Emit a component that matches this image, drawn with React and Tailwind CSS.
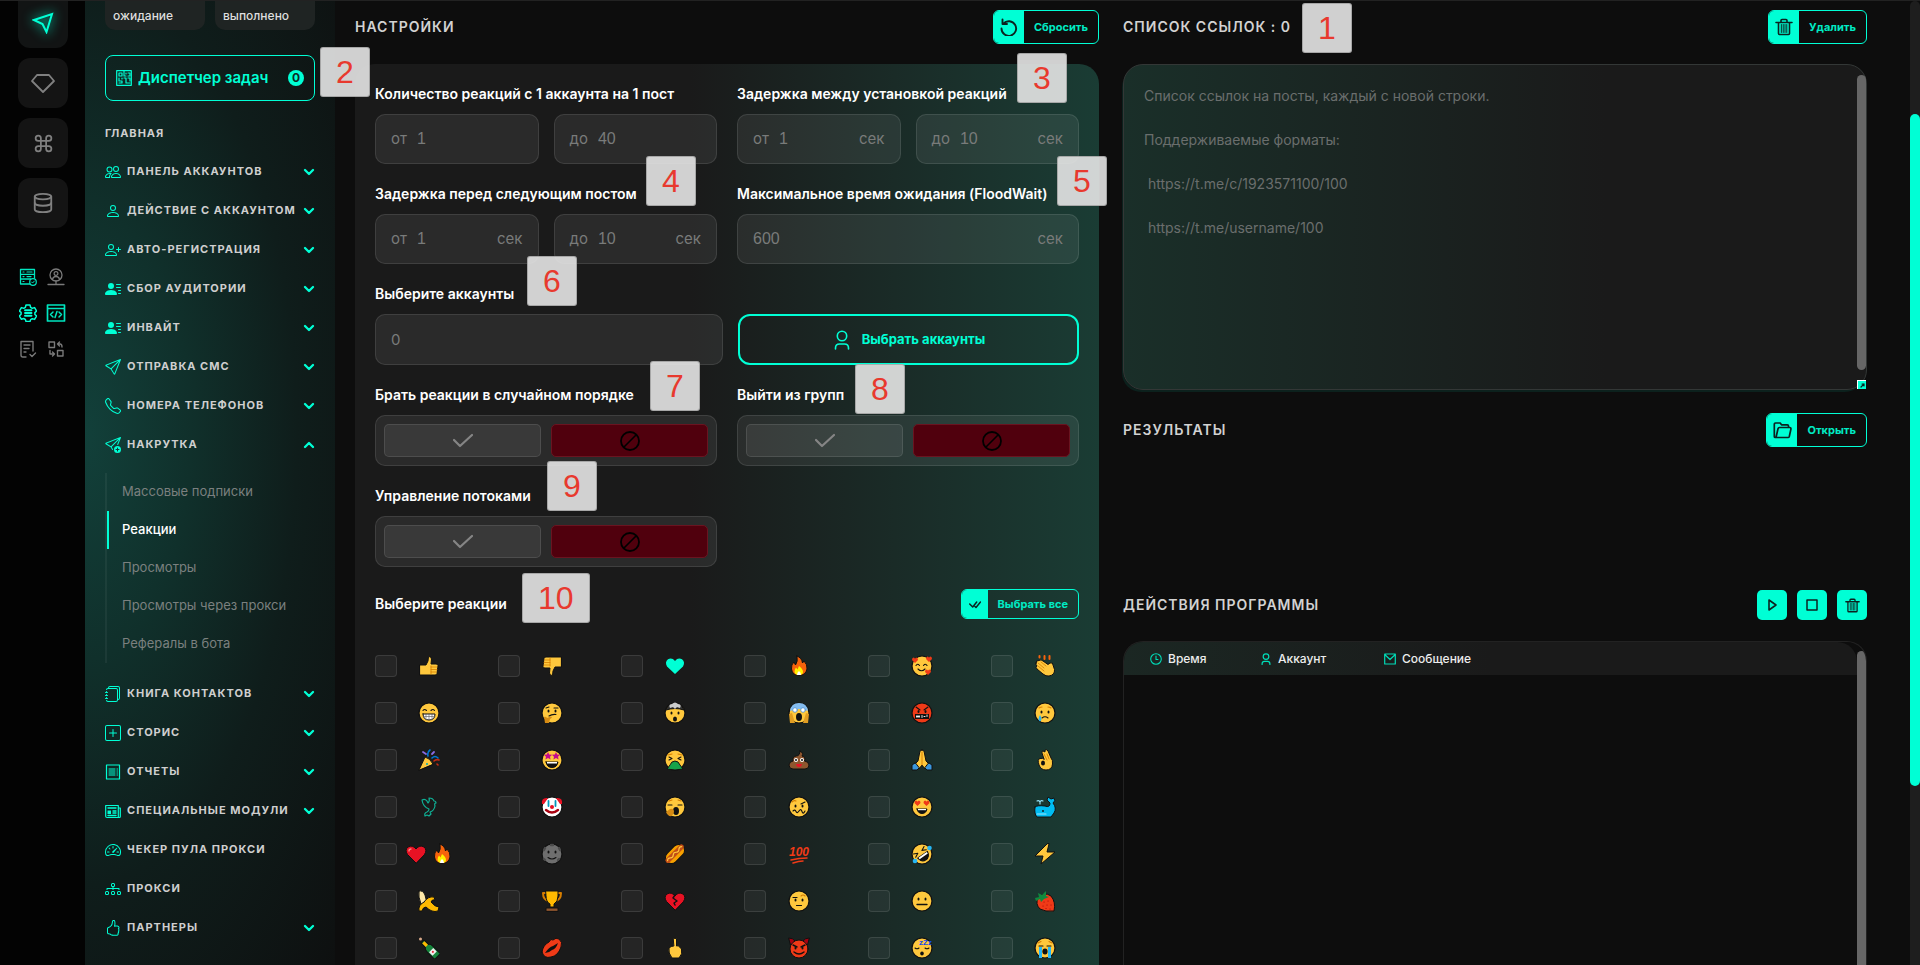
import { ChevronDown, ChevronUp, Command, Database } from "lucide-react";
import {
  BsDiagram3,
  BsHandThumbsUp,
  BsJournals,
  BsPeople,
  BsPerson,
  BsPersonLinesFill,
  BsPersonPlus,
  BsPlusSquare,
  BsSendPlus,
  BsSend,
  BsSpeedometer2,
  BsTelephone,
} from "react-icons/bs";

/* ---------- icons ---------- */

function Svg({ size = 16, box = 16, className, children }) {
  return (
    <svg
      width={size}
      height={size}
      viewBox={`0 0 ${box} ${box}`}
      fill="none"
      stroke="currentColor"
      strokeLinecap="round"
      strokeLinejoin="round"
      className={className}
      aria-hidden="true"
    >
      {children}
    </svg>
  );
}

const NavIcon = () => (
  <Svg size={22} box={22} className="drop-shadow-[0_0_6px_#00ffd5]">
    <path d="M2 8 20 2 14.5 20 10.5 12Z" strokeWidth="2" strokeLinejoin="miter" />
  </Svg>
);

const DiamondIcon = () => (
  <Svg size={24} box={24}>
    <path d="M6 4h12l5 6-11 11L1 10Z" strokeWidth="1.8" />
  </Svg>
);

const ResetIcon = () => (
  <Svg size={18} box={18}>
    <path d="M3.500 5.500a7.300 7.300 0 1 1-2 5" strokeWidth="1.900" />
    <path d="M2.500 1.500v4.500H7" strokeWidth="1.900" />
  </Svg>
);

const FolderIcon = () => (
  <Svg size={19} box={19}>
    <path d="M15.500 6.500V5q0-1.200-1.200-1.200H8.500L7.200 2H2.500Q1.300 2 1.300 3.200v12.300q0 1 1 1h12.700q1 0 1.300-1L18 7.800q0-1.300-1.200-1.300H6.500q-1.200 0-1.500 1.300L3 16.500" strokeWidth="1.700" />
  </Svg>
);

const TrashIcon = ({ size = 18 }) => (
  <Svg size={size} box={18}>
    <path d="M1 4.5h16M6 4V2.5Q6 1.5 7 1.5h4q1 0 1 1V4M3.5 5v10.5q0 1 1 1h9q1 0 1-1V5" strokeWidth="1.6" />
    <path d="M6.300 6.500v8M8.200 6.500v8M10 6.500v8M11.800 6.500v8" strokeWidth="1" />
  </Svg>
);

const AccountIcon = ({ size = 20, width = 1.6 }) => (
  <Svg size={size} box={20}>
    <circle cx="10" cy="6" r="4.7" strokeWidth={width} />
    <path d="M3.5 19v-1q0-4 4-4h5q4 0 4 4v1" strokeWidth={width} />
  </Svg>
);

const TaskIcon = () => (
  <Svg size={16} box={16}>
    <path d="M.7.700h14.600v14.600H.7Z" strokeWidth="1.2" />
    <path d="M3 3h3v3H3ZM3 8v3h3v2H3M8 1v5h2M12 3h2v3h-2M8 8h2v5h4M12 8h2v3M6 8v1M10 3v1" strokeWidth="1.2" />
  </Svg>
);

const ReportIcon = () => (
  <Svg>
    <path d="M1.5 1h13v14h-13Z" strokeWidth="1.2" />
    <path d="M4 5h6M4 7h6M4 9h6M4 11h6M12 5h.5M12 7h.5M12 9h.5M12 11h.5" strokeWidth="1" />
  </Svg>
);

const ModulesIcon = () => (
  <Svg>
    <path d="M.7 2.5h12.600v12H2q-1.300 0-1.300-1.200ZM13.300 5h2v8.500q0 1-1 1" strokeWidth="1.2" />
    <path d="M3 5h8M3 12.5h8M8 8h3M8 10h3" strokeWidth="1.4" />
    <path d="M2.5 7.5h3.500v3.500H2.500Z" fill="currentColor" stroke="none" />
  </Svg>
);

const ServerOkIcon = () => (
  <Svg size={18} box={18}>
    <path d="M11 16H1.5V1.5h14V10M1.5 6.300h14M1.5 11h10" strokeWidth="1.3" />
    <path d="M4 4h1M8 4h5M4 8.600h1M8 8.600h4M4 13.500h1" strokeWidth="1.2" />
    <circle cx="14" cy="14" r="3.3" strokeWidth="1.2" />
    <path d="m12.600 14 1 1 1.800-2" strokeWidth="1" />
  </Svg>
);

const ProxyUserIcon = () => (
  <Svg size={18} box={18}>
    <circle cx="9" cy="7" r="6" strokeWidth="1.3" />
    <circle cx="9" cy="5.5" r="1.9" strokeWidth="1.2" />
    <path d="M5.5 11.5Q6 8.500 9 8.500t3.500 3M9 13v3M1 16.500h16M8 16.500h2" strokeWidth="1.3" />
  </Svg>
);

const GearListIcon = () => (
  <Svg size={18} box={18}>
    <path d="M7 1h4l.6 2.300 1.700 1 2.300-.7 2 3.400-1.700 1.600v1.900L17.600 12l-2 3.400-2.300-.7-1.700 1L11 17.500H7l-.6-2-1.700-1-2.300.8-2-3.400 1.700-1.600V8.400L.400 7l2-3.400 2.300.7 1.700-1Z" strokeWidth="1.5" />
    <path d="M6 6.300h6.500M6 9h6.500M6 11.800h6.500" strokeWidth="1.9" />
  </Svg>
);

const CodeWindowIcon = () => (
  <Svg size={20} box={20}>
    <path d="M1.5 2h17v16h-17ZM1.5 5.500h17" strokeWidth="1.7" />
    <path d="m7 9-2.500 2.500L7 14M13 9l2.500 2.500L13 14M11 8.500l-2 6" strokeWidth="1.5" />
  </Svg>
);

const DocCheckIcon = () => (
  <Svg size={18} box={18}>
    <path d="M7 17H4q-2 0-2-2V1.500h12V11M5 5h6M5 8.500h5M5 12h2M11 14.500l2 2 3.500-3.500" strokeWidth="1.4" />
  </Svg>
);

const SwapIcon = () => (
  <Svg size={18} box={18}>
    <path d="M2 2h5.500v5.500H2ZM10.500 10.500H16V16h-5.500ZM10.500 4h2.500q2 0 2 3M12.500 2l-2 2 2 2M3 10.500V14h4M5.500 12 7.500 14l-2 2" strokeWidth="1.4" />
  </Svg>
);

const CheckIcon = () => (
  <Svg size={20} box={20}>
    <path d="m1 9 6 6L19 4" strokeWidth="2.2" />
  </Svg>
);

const DenyIcon = () => (
  <Svg size={20} box={20}>
    <circle cx="10" cy="10" r="9" strokeWidth="1.8" />
    <path d="m4 16 12-12" strokeWidth="1.6" />
  </Svg>
);

const DoubleCheckIcon = () => (
  <Svg size={12} box={12}>
    <path d="m.7 6 3 3 4-5M6 8.500 7 9.500l4.500-5.500" strokeWidth="1.5" />
  </Svg>
);

/* ---------- reactions ---------- */

const Y = "#ffc83d";
const K = "#111";

function Emoji({ children }) {
  return (
    <svg width="22" height="22" viewBox="0 0 22 22" fill="none" strokeLinecap="round" strokeLinejoin="round" aria-hidden="true">
      {children}
    </svg>
  );
}

function Face({ fill = Y, children }) {
  return (
    <Emoji>
      <circle cx="11" cy="11" r="10" fill={fill} stroke={K} strokeWidth="1.2" />
      {children}
    </Emoji>
  );
}

const Eyes = ({ y = 9 }) => (
  <g fill={K}>
    <ellipse cx="7.5" cy={y} rx="1" ry="1.5" />
    <ellipse cx="14.5" cy={y} rx="1" ry="1.5" />
  </g>
);

const Line = ({ d, c = K, w = 1.1 }) => <path d={d} stroke={c} strokeWidth={w} />;
const Shape = ({ d, f, s = K }) => <path d={d} fill={f} stroke={s} strokeWidth={s === "none" ? 0 : 1} />;

const thumb = "M2 10h6l2-4 .5-4.500q2.800-.3 3 2.500L13 9h5q2 0 2 1.500l-1 8Q19 20 17 20H2Z";
const heart = "M11 20 2.500 11.500Q-.5 7 3 4q4.500-2.500 8 2 3.500-4.500 8-2 3.500 3 .5 7.500Z";
const flame = "M9 1q5 2 5.500 7l1.500-2q3.500 3.500 3 8-1.500 6.500-8 6.500T3.500 14Q3 9.500 6 7l1.500 3Q10 7 9 1Z";

const Fire = () => (
  <Emoji>
    <Shape d={flame} f="#f7630c" />
    <Shape d="M11 11q4 3 4 6t-4 3-4.500-3Q6.500 14 8 12.500l1.500 2Z" f="#fff100" s="none" />
    <Shape d="M11 16q2 1.500 2 4H9q0-2.500 2-4Z" f="#fff" s="none" />
  </Emoji>
);

const RedHeart = () => (
  <Emoji>
    <Shape d={heart} f="#e81224" />
    <Line d="M4 8q0-2 2-2" c="#f38b86" w={1.3} />
  </Emoji>
);

const miniHeart = (x, y, f = "#f03a17") => (
  <path d={`M${x} ${y + 3}l-3-3q0-2.500 1.500-2.500T${x} ${y - 1}q0-1.500 1.500-1.500T${x + 3} ${y}Z`} fill={f} />
);

const REACTIONS = [
  ["Лайк", <Emoji><Shape d={thumb} f={Y} /><Line d="M13 12h6M13 14.500h6M13 17h5M13 11v8" c="#d67d00" w={0.8} /></Emoji>],
  ["Дизлайк", <Emoji><g transform="rotate(180 11 11)"><Shape d={thumb} f={Y} /><Line d="M13 12h6M13 14.500h6M13 17h5M13 11v8" c="#d67d00" w={0.8} /></g></Emoji>],
  ["Сердце", <Emoji><Shape d="M11 19 3 11.500Q.500 7 4 4.300q4-2 7 1.700 3-3.700 7-1.700 3.500 2.700 1 7.200Z" f="#00ffd5" s="none" /></Emoji>],
  ["Огонь", <Fire />],
  ["Влюблён", <Face><Line d="M5 10.500q1.500-2.500 3.500 0M12.500 10.500q2-2.500 3.500 0M7 14q3.500 3.500 7 0" />{miniHeart(4, 5)}{miniHeart(18, 4)}{miniHeart(17, 17)}</Face>],
  ["Аплодисменты", <Emoji><Shape d="M2 8q0-3 3-2.500Q7 4 9 6l5 3.500 2-1.500q3-1 3 2l1.500 4.500Q21 20 15 21q-3 .5-6-2l-6-5q-2-2 0-3-1.500-1.500-1-3Z" f={Y} /><Line d="m4 8 6 5M4 11l6 5M7 7l5 4" c="#d67d00" w={0.8} /><Line d="M5.500 1v1.500M10.500 1v3M15.500 1v3" c="#f7630c" w={2} /></Emoji>],

  ["Радость", <Face><Line d="M5 8.500q1.500-2 3.500 0M13 8.500q2-2 3.500 0" /><Shape d="M5 12h12q0 6-6 6t-6-6Z" f="#fff" /><Line d="M5.500 14.500h11M8 12v5M11 12v6M14 12v5" c="#555" w={0.6} /></Face>],
  ["Раздумье", <Face><Eyes y={9} /><Line d="M13 6h4M5 6l3-1" /><Line d="M8 14q3-2 7-1.500" /><Shape d="M3 15q2-1 3 1l4-1.500q2 1-1 2.500l-1 4H4Z" f="#d68b13" s="none" /></Face>],
  ["Взрыв мозга", <Face><Shape d="M2 8q9-3 18 0l-3-5q-6-3-12 0Z" f="#333" /><Shape d="M6 6q-2-4 2-4 3-3 6 0 4 0 2 4l-3-1-2 2-2-2Z" f="#ccc" s="none" /><Eyes y={11} /><ellipse cx="11" cy="17" rx="2" ry="2.5" fill={K} /></Face>],
  ["Ужас", <Face><Shape d="M2 9Q3 1 11 1t9 8Q11 5 2 9Z" f="#84bdf0" s="none" /><circle cx="7" cy="8" r="2.3" fill="#fff" stroke="#4a8fd0" strokeWidth=".8" /><circle cx="15" cy="8" r="2.3" fill="#fff" stroke="#4a8fd0" strokeWidth=".8" /><ellipse cx="11" cy="15" rx="3" ry="4" fill={K} /><Shape d="M1 12l3-1 3 10H2ZM21 12l-3-1-3 10h5Z" f="#e19d22" s="none" /></Face>],
  ["Ругань", <Face fill="#f03a17"><Line d="m5 5 4 3M17 5l-4 3" /><Eyes y={9.5} /><path d="M4 12h14v5H4Z" fill={K} /><Line d="M6 13.500v2M8 13.500v2M5.500 14.500h3M11 13.500v2M13 14.500h1M16 13v1.500" c="#fff" w={0.9} /></Face>],
  ["Слеза", <Face><Eyes y={10} /><Line d="M5 6q1.500-1 3-1M17 6q-1.500-1-3-1" c="#d67d00" /><Line d="M8 16q3-2.500 6 0" /><Shape d="M6 13q3 5 0 6.500-3-1.500 0-6.500Z" f="#26b6f5" s="none" /></Face>],

  ["Праздник", <Emoji><Shape d="M1 21 7 8q5 1 8 7Z" f={Y} /><Line d="M10 7q-1-4 2-6M14 9q3-3 6 0" c="#0078d4" w={1.6} /><Line d="M16 3l-2 2M5 3l3 2" c="#886ce4" w={1.8} /><Line d="M16 12q2-2 5-1M19 15l1 1" c="#c52b12" w={1.6} /><circle cx="9" cy="15" r="1" fill="#00a9b5" /></Emoji>],
  ["Восторг", <Face><Shape d="m7 3 1.200 2.500 3 .3-2.200 2 .6 2.700L7 9l-2.600 1.500.6-2.700-2.200-2 3-.3ZM15 3l1.200 2.500 3 .3-2.200 2 .6 2.700L15 9l-2.600 1.500.6-2.700-2.200-2 3-.3Z" f="#c30a8c" s="none" /><Shape d="M5 13h12q-1 5.500-6 5.500T5 13Z" f={K} /><path d="M6 13h10v1.500H6Z" fill="#fff" /></Face>],
  ["Тошнота", <Face><Line d="m5 8 3 1.500L5 11M17 8l-3 1.500 3 1.500" /><Line d="M4 6l4-1M18 6l-4-1" c="#d67d00" /><Shape d="M8 13q3-2 6 0l2 3 3 4-8 1-8-1 3-4Z" f="#16a34a" /></Face>],
  ["Какашка", <Emoji><Shape d="M12 2q4 2 2 5 4 1 2.500 5 4 .5 4.500 4 0 4-4 4H5q-4 0-4-4 .5-3.500 4-4Q4 8 8 7q4 0 4-5Z" f="#8e562e" /><circle cx="8" cy="11" r="2" fill="#fff" /><circle cx="14" cy="11" r="2" fill="#fff" /><circle cx="8" cy="11" r="1" fill={K} /><circle cx="14" cy="11" r="1" fill={K} /><Shape d="M8 15h6q-.5 3-3 3t-3-3Z" f="#e81224" s="none" /></Emoji>],
  ["Мольба", <Emoji><Shape d="M11 1q-2-.5-2.200 2L7 12l-3 3 4 5 3-4 3 4 4-5-3-3-1.800-9Q13 .500 11 1Z" f={Y} /><Line d="M11 3v13" c="#d67d00" w={0.9} /><Shape d="m4 14-3 2v5h5l2-2ZM18 14l3 2v5h-5l-2-2Z" f="#3a96dd" /></Emoji>],
  ["Окей", <Emoji><Shape d="M10 10 8 4q-.5-2 1-2l2 1 0-2q2-1 3 1l3 7q2 2 1.500 6Q18 21 12 21q-5 0-7-5-2-6 1-6.500 3-.5 4 .5Z" f={Y} /><Line d="m10 5 3 6M13 5l2 5" c="#d67d00" w={0.9} /><ellipse cx="9" cy="14" rx="2" ry="2.5" fill={K} /></Emoji>],

  ["Голубь", <Emoji><Line d="M4 4q4-2 6 3 2-2 1-5 4 0 5 3 2 0 2 2-2 0-1 3-1 5-5 6l1 2-2 2-2-1-2 1q-1-3 2-4 2-1 2-3-6-2-7-9Z" c="#0fae94" w={1.2} /></Emoji>],
  ["Клоун", <Face fill="#fff"><Shape d="M1 8Q0 1 7 2L3 8ZM21 8Q22 1 15 2l4 6Z" f="#e81224" s="none" /><Line d="M7.5 5v5M14.500 5v5" c="#0099bc" w={1.8} /><circle cx="11" cy="11" r="2" fill="#e81224" /><Line d="M5 14q6 5 12 0" c="#a80010" w={2.4} /></Face>],
  ["Зевок", <Face><Line d="M4 9h4M14 9h4" /><Line d="M5 5l3-1M17 5l-3-1" c="#d67d00" /><ellipse cx="12" cy="15" rx="3" ry="4" fill={K} /><Shape d="M2 16l4-3q4-1 4 3l-2 4q-4 1-6-4Z" f="#d68b13" s="none" /></Face>],
  ["Опьянение", <Face><Eyes y={10} /><Line d="M13 8l4-2" /><Line d="M4 6q2-2 4-1" c="#d67d00" /><Line d="M5 15q2-2 3 .5t3-.5 3 .5 3-.5" /></Face>],
  ["Любовь", <Face>{miniHeart(6.5, 7)}{miniHeart(15.5, 7)}<Shape d="M6 13h10q-1 4.500-5 4.500T6 13Z" f={K} /><path d="M7 13h8v1.200H7Z" fill="#fff" /></Face>],
  ["Кит", <Emoji><Shape d="M1 11q2-2 10-1 5 2 5-3l-3-3 1-3 3 2 3-1q2 3-1 5 4 5 1 10l-3 4H3q-3-3-2-10Z" f="#00bcf2" /><Line d="M6 8V5M3 5q2-1 3 1 1-2 3-1M3 18h9" c="#9be8ff" /><circle cx="9" cy="15" r=".9" fill={K} /></Emoji>],

  ["Горящее сердце", <span className="flex gap-1"><RedHeart /><Fire /></span>],
  ["Луна", <Face fill="#6e6e6e"><Line d="M3 7l1-2M18 5l1 2M3 16l1 1M17 17l1-1M10 2h2" c="#4c4c4c" w={2.4} /><Eyes /><Line d="M7 14.500q4 3 8 0" /></Face>],
  ["Хот-дог", <Emoji><g transform="rotate(-45 11 11)"><rect x="0" y="5" width="22" height="12" rx="6" fill="#f7a000" stroke={K} /><rect x="-1" y="8" width="24" height="5" rx="2.5" fill="#c24e16" /><Line d="M1 10.500q2-2 4 0t4 0 4 0 4 0 4 0" c={Y} w={1.2} /></g></Emoji>],
  ["Сто", <Emoji><text x="11" y="13" textAnchor="middle" fontFamily="Liberation Sans" fontStyle="italic" fontWeight="700" fontSize="12" fill="#f03a17">100</text><Line d="M3 17q8-2 16-2M5 20q6-2 10-2" c="#f03a17" w={1.5} /></Emoji>],
  ["Хохот", <Face><g transform="rotate(-35 11 11)"><Line d="m4 6 4 2-4 2M17 6l-4 2 4 2" /><Shape d="M5 12h12q-1 6-6 6t-6-6Z" f={K} /><path d="M6 12h10v2H6Z" fill="#fff" /></g><circle cx="4" cy="18" r="2.3" fill="#26b6f5" /><circle cx="18.5" cy="5" r="2.3" fill="#26b6f5" /></Face>],
  ["Молния", <Emoji><Shape d="M13 1 1 13h8L7 21 21 9h-8l2-8Z" f={Y} /></Emoji>],

  ["Банан", <Emoji><Shape d="M1 1q4-1 6 4l2 8-6 1Q0 7 1 1Z" f="#ffe9a8" /><Shape d="M6 12q4-6 10-5l1 3q-3-1-4 2 4 5 8 5l-1 4q-6 2-12-4-3 0-4 4H1q-1-6 5-9Z" f="#ffb900" /></Emoji>],
  ["Кубок", <Emoji><Line d="M5 3H2q0 7 6 8M17 3h3q0 7-6 8" c="#d67d00" w={2} /><Shape d="M5 1h12v5q0 6-4 8v3H9v-3Q5 12 5 6Z" f="#ffb900" /><Shape d="M5 21v-3h12v3Z" f="#8e562e" /></Emoji>],
  ["Разбитое сердце", <Emoji><Shape d={heart} f="#e81224" /><Line d="M11 5 9 8l4 3-3 2 1 2" w={1.5} /></Emoji>],
  ["Сомнение", <Face><Eyes y={10} /><Line d="M5 7.500h4" /><Line d="M13 6q2-2 4 0" c="#d67d00" /><Line d="M8.500 15.500h5" /></Face>],
  ["Нейтрально", <Face><Eyes y={9} /><Line d="M6 14.500h10" w={1.3} /></Face>],
  ["Клубника", <Emoji><Shape d="M4 8q6-7 13-2 5 6 3 15-9 1-14-2-5-5-2-11Z" f="#f03a17" /><Shape d="M1 8l4-1-1-4 4 2 4-4 0 5 3 1-5 2-3 3-1-3-4 2Z" f="#10893e" s="none" /><Line d="M10 12h.1M14 11h.1M9 16h.1M13 15h.1M17 15h.1M16 19h.1M12 18.500h.1" c="#a80010" /></Emoji>],

  ["Шампанское", <Emoji><g transform="rotate(-45 11 11)"><Shape d="M9 2h4v6q2 1 2 4v11H7V12q0-3 2-4Z" f="#16853d" /><path d="M8 14h6v5H8Z" fill="#eee" /><path d="M9.500 3h3v5h-3Z" fill="#ffb900" /><circle cx="11" cy="16.5" r="1" fill="#e81224" /></g><circle cx="2.5" cy="2" r="1.5" fill="#d9a98a" /></Emoji>],
  ["Поцелуй", <Emoji><Shape d="M1 15q1-7 7-10 2-4 4-2 3-3 6-1 4 3 2 8-3 9-10 10Q3 22 1 15Z" f="#f03a17" /><Shape d="M4 16q4-6 8-7l5-3q-2 6-6 7-3 3-7 3Z" f={K} s="none" /></Emoji>],
  ["Средний палец", <Emoji><Shape d="M9.5 2q1.500-2 3 0v7q2-1 3 1l2 2q1.500 5-2.500 9H8q-4-5-3-10 2-2 4.500-2Z" f={Y} /></Emoji>],
  ["Чертёнок", <Emoji><Shape d="M1 1q4 0 6 3L3 9ZM21 1q-4 0-6 3l4 5Z" f="#a80010" /><circle cx="11" cy="12" r="9" fill="#f03a17" stroke={K} /><Line d="m5 8 4 2M17 8l-4 2M6 15q5 4 10 0" w={1.4} /><Eyes y={11} /></Emoji>],
  ["Сон", <Face><Line d="M4 11q2 1.500 4 0M14 11q2 1.500 4 0" /><ellipse cx="11" cy="16.5" rx="1.8" ry="2" fill={K} /><text x="8" y="8" fontFamily="Liberation Sans" fontWeight="700" fontSize="8" fill="#1648e8">zZz</text></Face>],
  ["Рыдание", <Face><Line d="M5 9h4M13 9h4" /><Line d="M4 6l3-1.500M18 6l-3-1.500" c="#d67d00" /><ellipse cx="11" cy="14.5" rx="2.6" ry="3" fill={K} /><path d="M5 10h3v11H5ZM14 10h3v11h-3Z" fill="#26b6f5" /></Face>],
];

/* ---------- data ---------- */

const MENU_TOP = [
  [BsPeople, "Панель аккаунтов", true],
  [BsPerson, "Действие с аккаунтом", true],
  [BsPersonPlus, "Авто-регистрация", true],
  [BsPersonLinesFill, "Сбор аудитории", true],
  [BsPersonLinesFill, "Инвайт", true],
  [BsSend, "Отправка СМС", true],
  [BsTelephone, "Номера телефонов", true],
];

const SUBMENU = ["Массовые подписки", "Реакции", "Просмотры", "Просмотры через прокси", "Рефералы в бота"];

const MENU_BOTTOM = [
  [BsJournals, "Книга контактов", true],
  [BsPlusSquare, "Сторис", true],
  [ReportIcon, "Отчеты", true],
  [ModulesIcon, "Специальные модули", true],
  [BsSpeedometer2, "Чекер пула прокси", false],
  [BsDiagram3, "Прокси", false],
  [BsHandThumbsUp, "Партнеры", true],
];

const LINKS_HINT =
  "Список ссылок на посты, каждый с новой строки.\n\nПоддерживаемые форматы:\n\n https://t.me/c/1923571100/100\n\n https://t.me/username/100";

/* ---------- parts ---------- */

function Marker({ n, className }) {
  return (
    <span
      className={`absolute z-10 flex h-[50px] min-w-[50px] items-center justify-center rounded-[3px] border border-[#8a8a8a]/60 bg-[#e6e6e6]/90 px-[15px] font-['Liberation_Sans',sans-serif] text-[32px] leading-8 font-normal text-[#e8392e] ${className}`}
    >
      {n}
    </span>
  );
}

function MenuItem({ icon: Icon, text, arrow, open }) {
  const Arrow = open ? ChevronUp : ChevronDown;
  return (
    <a href="#" className="flex h-[39px] items-center text-[#00ffd5]">
      <Icon size={16} className="shrink-0" />
      <span className="ml-1.5 flex-1 text-[11px] font-bold tracking-[1px] whitespace-nowrap text-[#cfcfcf] uppercase">{text}</span>
      {arrow && <Arrow size={16} strokeWidth={3.5} className="-mr-0.5 shrink-0" />}
    </a>
  );
}

function Sidebar() {
  return (
    <aside className="w-[250px] shrink-0 bg-[radial-gradient(ellipse_at_0%_45%,#12403a_0%,#10302b_30%,#0f1d1b_60%,#0e1010_100%)] px-5">
      <div className="grid grid-cols-2 gap-2.5 text-xs font-medium text-[#dedede]">
        <div className="h-[29px] rounded-b-[10px] bg-[#1f2423] px-2 pt-[7px]">ожидание</div>
        <div className="h-[29px] rounded-b-[10px] bg-[#1f2423] px-2 pt-[7px]">выполнено</div>
      </div>
      <div className="relative mt-[25px]">
        <button className="flex h-[46px] w-full items-center rounded-lg border border-[#00ffd5] px-2.5 text-[#00ffd5]">
          <TaskIcon />
          <span className="ml-1.5 flex-1 text-left text-[15px] font-semibold whitespace-nowrap">Диспетчер задач</span>
          <span className="flex size-4 items-center justify-center rounded-full bg-[#00ffd5] text-xs font-bold text-[#0d2a25]">0</span>
        </button>
        <Marker n="2" className="-top-2 left-[215px]" />
      </div>
      <h2 className="mt-[22px] mb-[9px] text-[11px] leading-5 font-bold tracking-[1px] text-[#cfcfcf] uppercase">Главная</h2>
      <nav>
        {MENU_TOP.map(([icon, text, arrow]) => (
          <MenuItem key={text} icon={icon} text={text} arrow={arrow} />
        ))}
        <MenuItem icon={BsSendPlus} text="Накрутка" arrow open />
        <ul className="mt-[9px] mb-[11px] border-l-2 border-white/5">
          {SUBMENU.map((text) => (
            <li key={text}>
              <a
                href="#"
                className={`flex h-[38px] items-center border-l-2 pl-[13px] text-[13px] whitespace-nowrap ${
                  text === "Реакции" ? "border-[#00ffd5] font-medium text-white" : "border-transparent text-[#7b807f]"
                }`}
              >
                {text}
              </a>
            </li>
          ))}
        </ul>
        {MENU_BOTTOM.map(([icon, text, arrow]) => (
          <MenuItem key={text} icon={icon} text={text} arrow={arrow} />
        ))}
      </nav>
    </aside>
  );
}

function Rail() {
  return (
    <div className="w-[85px] shrink-0 bg-[#030303] pl-[18px]">
      <div className="flex w-[50px] flex-col gap-2.5 text-[#808080]">
        <button aria-label="Отправка" className="flex h-[47px] items-center justify-center rounded-b-xl bg-[#121414] pb-1 text-[#00ffd5]"><NavIcon /></button>
        <button aria-label="Премиум" className="flex h-[50px] items-center justify-center rounded-xl bg-[#141414]"><DiamondIcon /></button>
        <button aria-label="Команды" className="flex h-[50px] items-center justify-center rounded-xl bg-[#141414]"><Command size={21} /></button>
        <button aria-label="База" className="flex h-[50px] items-center justify-center rounded-xl bg-[#141414]"><Database size={22} /></button>
      </div>
      <div className="mt-[31px] grid w-12 grid-cols-[20px_20px] justify-between text-[#7a7a7a]">
        <a href="#" aria-label="Сервер" className="flex h-9 items-center justify-center text-[#00e6c0]"><ServerOkIcon /></a>
        <a href="#" aria-label="Прокси" className="flex h-9 items-center justify-center"><ProxyUserIcon /></a>
        <a href="#" aria-label="Настройки" className="flex h-9 items-center justify-center text-[#00ffd5]"><GearListIcon /></a>
        <a href="#" aria-label="Код" className="flex h-9 items-center justify-center text-[#00e6c0]"><CodeWindowIcon /></a>
        <a href="#" aria-label="Журнал" className="flex h-9 items-center justify-center"><DocCheckIcon /></a>
        <a href="#" aria-label="Обмен" className="flex h-9 items-center justify-center"><SwapIcon /></a>
      </div>
    </div>
  );
}

function IconButton({ icon, text, small }) {
  return (
    <button className={`flex items-stretch overflow-hidden rounded-md border border-[#00ffd5] ${small ? "h-[30px]" : "h-[34px]"}`}>
      <span className={`flex items-center justify-center bg-[#00ffd5] text-[#0b2320] ${small ? "w-[26px]" : "w-[30px]"}`}>{icon}</span>
      <span className="flex items-center px-2.5 text-[11px] font-bold whitespace-nowrap text-[#00ebc4]">{text}</span>
    </button>
  );
}

function SectionHead({ title, children, marker }) {
  return (
    <div className="relative flex h-[34px] items-center justify-between">
      <h2 className="text-sm font-semibold tracking-[1px] text-[#d2d2d2] uppercase">{title}</h2>
      {marker}
      {children}
    </div>
  );
}

function NumberField({ prefix, unit, hint, label }) {
  return (
    <label className="flex h-[50px] w-full min-w-0 items-center rounded-[10px] border border-white/10 bg-white/7 px-[15px] text-[15px] text-[#797b7a]">
      {prefix && <span className="mr-2.5">{prefix}</span>}
      <input
        aria-label={label}
        placeholder={hint}
        className="w-0 min-w-0 flex-1 bg-transparent font-['Liberation_Sans',sans-serif] text-base outline-none placeholder:text-[#797b7a]"
      />
      {unit && <span>{unit}</span>}
    </label>
  );
}

function Field({ label, marker, children }) {
  return (
    <div className="relative">
      <div className="mb-2.5 text-sm leading-5 font-semibold whitespace-nowrap text-white">{label}</div>
      {marker}
      {children}
    </div>
  );
}

function Toggle({ label }) {
  return (
    <div role="group" aria-label={label} className="flex h-[51px] gap-2.5 rounded-[10px] border border-white/10 bg-white/7 p-2">
      <button aria-label="Да" className="flex flex-1 items-center justify-center rounded-[5px] border border-white/10 bg-white/7 text-[#858585]">
        <CheckIcon />
      </button>
      <button aria-label="Нет" className="flex flex-1 items-center justify-center rounded-[5px] border border-[#6a1420] bg-[#50000d] text-black">
        <DenyIcon />
      </button>
    </div>
  );
}

function Settings() {
  return (
    <section className="flex min-w-0 flex-col">
      <SectionHead title="Настройки">
        <IconButton icon={<ResetIcon />} text="Сбросить" />
      </SectionHead>
      <div className="mt-5 flex-1 rounded-t-[20px] bg-[linear-gradient(90deg,#1a1a1a_45%,#1a3c34_100%)] p-5">
        <div className="grid grid-cols-2 gap-5">
          <Field label="Количество реакций с 1 аккаунта на 1 пост">
            <div className="flex gap-[15px]">
              <NumberField prefix="от" hint="1" label="Реакций от" />
              <NumberField prefix="до" hint="40" label="Реакций до" />
            </div>
          </Field>
          <Field label="Задержка между установкой реакций" marker={<Marker n="3" className="-top-[31px] left-[280px]" />}>
            <div className="flex gap-[15px]">
              <NumberField prefix="от" hint="1" unit="сек" label="Задержка от" />
              <NumberField prefix="до" hint="10" unit="сек" label="Задержка до" />
            </div>
          </Field>
          <Field label="Задержка перед следующим постом" marker={<Marker n="4" className="-top-7 left-[271px]" />}>
            <div className="flex gap-[15px]">
              <NumberField prefix="от" hint="1" unit="сек" label="Пауза от" />
              <NumberField prefix="до" hint="10" unit="сек" label="Пауза до" />
            </div>
          </Field>
          <Field label="Максимальное время ожидания (FloodWait)" marker={<Marker n="5" className="-top-7 left-[320px]" />}>
            <NumberField hint="600" unit="сек" label="Максимальное время ожидания" />
          </Field>
        </div>

        <div className="mt-5">
          <Field label="Выберите аккаунты" marker={<Marker n="6" className="-top-7 left-[152px]" />}>
            <div className="flex gap-[15px]">
              <input
                aria-label="Выберите аккаунты"
                placeholder="0"
                className="h-[51px] w-0 flex-1 rounded-[10px] border border-white/10 bg-white/7 px-[15px] text-[15px] outline-none placeholder:text-[#797b7a]"
              />
              <button className="flex h-[51px] w-[341px] items-center justify-center gap-2.5 rounded-xl border-2 border-[#00ffd5] text-[13px] font-bold text-[#00ffd5]">
                <AccountIcon />
                Выбрать аккаунты
              </button>
            </div>
          </Field>
        </div>

        <div className="mt-5 grid grid-cols-2 gap-5">
          <Field label="Брать реакции в случайном порядке" marker={<Marker n="7" className="-top-6 left-[275px]" />}>
            <Toggle label="Брать реакции в случайном порядке" />
          </Field>
          <Field label="Выйти из групп" marker={<Marker n="8" className="-top-[21px] left-[118px]" />}>
            <Toggle label="Выйти из групп" />
          </Field>
          <Field label="Управление потоками" marker={<Marker n="9" className="-top-[25px] left-[172px]" />}>
            <Toggle label="Управление потоками" />
          </Field>
        </div>

        <div className="relative mt-[22px] flex items-center justify-between">
          <h3 className="text-sm font-semibold text-white">Выберите реакции</h3>
          <Marker n="10" className="-top-4 left-[147px]" />
          <IconButton small icon={<DoubleCheckIcon />} text="Выбрать все" />
        </div>

        <div className="mt-9 grid grid-cols-6 gap-x-[35px] gap-y-[25px]">
          {REACTIONS.map(([name, art]) => (
            <label key={name} className="flex h-[22px] items-center">
              <input
                type="checkbox"
                aria-label={name}
                className="size-[22px] shrink-0 appearance-none rounded border border-white/10 bg-white/5 checked:bg-[#00ffd5]"
              />
              <span className="flex flex-1 justify-center pr-0.5">{art}</span>
            </label>
          ))}
        </div>
      </div>
    </section>
  );
}

function Program() {
  return (
    <section className="flex min-w-0 flex-col">
      <SectionHead title="Список ссылок : 0" marker={<Marker n="1" className="-top-[7px] left-[179px]" />}>
        <IconButton icon={<TrashIcon />} text="Удалить" />
      </SectionHead>
      <div className="relative mt-5 h-[326px] shrink-0">
        <textarea
          aria-label="Список ссылок"
          placeholder={LINKS_HINT}
          className="block size-full resize-none overflow-hidden rounded-[20px] border border-[#333736] bg-[linear-gradient(90deg,#1a2f29_0%,#1a1a1a_65%)] px-5 py-5 text-sm leading-[22px] shadow-[-2px_3px_0_-1px_#0c211d] outline-none placeholder:text-[#6a6e6d]"
        />
        <span className="absolute top-[11px] right-px h-[295px] w-[9px] rounded-full bg-[#666]" />
        <span className="absolute right-px bottom-px size-[9px] border-t border-l border-white bg-[#00ffd5] text-[#0b2320]">
          <Svg size={8} box={8}><path d="m3 6 3-3M4 3h2v2" strokeWidth="1.2" /></Svg>
        </span>
      </div>

      <div className="mt-[23px] mb-[143px]">
        <SectionHead title="Результаты">
          <IconButton icon={<FolderIcon />} text="Открыть" />
        </SectionHead>
      </div>

      <div className="flex h-[30px] items-center justify-between">
        <h2 className="text-sm font-semibold tracking-[1px] text-[#d2d2d2] uppercase">Действия программы</h2>
        <div className="flex gap-2.5 text-[#0b2320]">
          <button aria-label="Запустить" className="flex size-[30px] items-center justify-center rounded-[5px] bg-[#00ffd5]">
            <Svg size={14} box={14}><path d="M4 2v10l7-5Z" strokeWidth="1.6" /></Svg>
          </button>
          <button aria-label="Остановить" className="flex size-[30px] items-center justify-center rounded-[5px] bg-[#00ffd5]">
            <Svg size={14} box={14}><path d="M2 2h10v10H2Z" strokeWidth="1.5" /></Svg>
          </button>
          <button aria-label="Очистить" className="flex size-[30px] items-center justify-center rounded-[5px] bg-[#00ffd5]">
            <TrashIcon size={15} />
          </button>
        </div>
      </div>

      <div className="relative mt-[21px] flex-1 overflow-hidden rounded-t-[20px] border border-b-0 border-[#222]">
        <div className="mr-[9px] overflow-hidden rounded-tr-[20px]">
          <table className="w-full table-fixed text-left text-xs text-[#ededed]">
            <thead>
              <tr className="h-[33px] bg-[linear-gradient(90deg,#1b2723_0%,#1a1a1a_50%)]">
                <th className="w-[110px] pl-[26px] font-medium">
                  <span className="flex items-center gap-1.5">
                    <span className="text-[#00dcb8]"><Svg size={12} box={12}><circle cx="6" cy="6" r="5.3" strokeWidth="1.1" /><path d="M6 3v3.500h2" strokeWidth="1.1" /></Svg></span>
                    Время
                  </span>
                </th>
                <th className="w-[124px] pl-[26px] font-medium">
                  <span className="flex items-center gap-1.5">
                    <span className="text-[#00dcb8]"><AccountIcon size={12} width={2} /></span>
                    Аккаунт
                  </span>
                </th>
                <th className="pl-[26px] font-medium">
                  <span className="flex items-center gap-1.5">
                    <span className="text-[#00dcb8]"><Svg size={12} box={12}><path d="M.700 1h10.600v10H.700Zm0 .5L6 6.500l5.300-5" strokeWidth="1.2" /></Svg></span>
                    Сообщение
                  </span>
                </th>
              </tr>
            </thead>
            <tbody />
          </table>
        </div>
        <span className="absolute top-[9px] right-0 bottom-0 w-[9px] rounded-t-full bg-[#666]" />
      </div>
    </section>
  );
}

export default function App() {
  return (
    <div className="flex h-screen overflow-hidden border-t border-[#222] bg-[#0d0d0d] font-['Inter',sans-serif]">
      <Rail />
      <Sidebar />
      <main className="grid min-w-0 flex-1 grid-cols-2 gap-6 overflow-hidden pt-[9px] pr-[43px] pl-5">
        <Settings />
        <Program />
      </main>
      <div className="w-2.5 shrink-0 rounded-t-full bg-[#1e1e1e] pt-[113px]">
        <div className="h-[79%] w-full rounded-full bg-[#00ffd5]" />
      </div>
    </div>
  );
}
